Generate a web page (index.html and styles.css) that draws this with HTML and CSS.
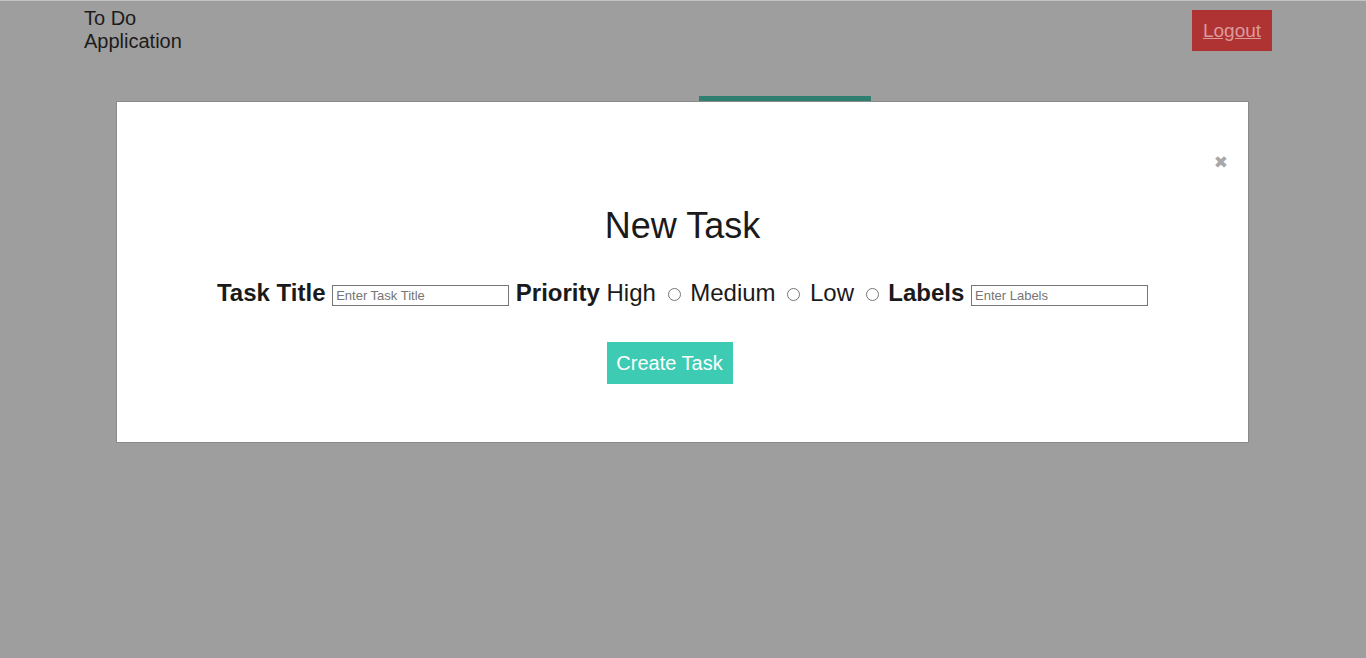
FILE: index.html
```html
<!DOCTYPE html>
<html>
<head>
<meta charset="utf-8">
<title>To Do Application</title>
<link rel="stylesheet" href="styles.css">
</head>
<body>
<header class="topbar">
  <div class="brand">To Do Application</div>
  <a class="logout" href="#">Logout</a>
</header>
<div class="tabs"><div class="tab-active"></div></div>

<div class="modal">
  <button class="close" type="button" aria-label="Close">&#x2716;</button>
  <h2 class="modal-title">New Task</h2>
  <form class="task-form">
    <div class="row">
      <b class="lbl">Task Title</b> <input class="txt" type="text" placeholder="Enter Task Title"> <b class="lbl">Priority</b> High <input type="radio" name="p"> Medium <input type="radio" name="p"> Low <input type="radio" name="p"> <b class="lbl">Labels</b> <input class="txt" type="text" placeholder="Enter Labels">
    </div>
    <div class="actions">
      <button class="create" type="button">Create Task</button>
    </div>
  </form>
</div>
</body>
</html>
```

FILE: styles.css
```css
html, body {
  margin: 0;
  padding: 0;
}
body {
  background: #9e9e9e;
  border-top: 1px solid #c2c2c2;
  height: 657px;
  font-family: "Liberation Sans", Arial, sans-serif;
  color: #1c1c1c;
  overflow: hidden;
}
.topbar {
  display: flex;
  justify-content: space-between;
  align-items: flex-start;
  padding: 6px 94px 0 84px;
  height: 89px;
}
.brand {
  width: 110px;
  font-size: 20px;
  line-height: 23px;
}
.logout {
  margin-top: 3px;
  width: 80px;
  height: 41px;
  background: #b03333;
  color: #dc9a9a;
  font-size: 19px;
  display: flex;
  align-items: center;
  justify-content: center;
  text-decoration: underline;
}
.tabs {
  display: flex;
  padding-left: 699px;
}
.tab-active {
  width: 172px;
  height: 6px;
  background: #2e7f70;
}
.modal {
  position: absolute;
  top: 101px;
  left: 116px;
  width: 1131px;
  height: 340px;
  background: #fff;
  border: 1px solid #8a8a8a;
  text-align: center;
}
.close {
  position: absolute;
  top: 50px;
  right: 20px;
  border: 0;
  background: none;
  padding: 0;
  font-size: 17px;
  line-height: 20px;
  color: #a8a8a8;
  font-family: "DejaVu Sans", sans-serif;
  cursor: pointer;
}
.modal-title {
  margin: 104px 0 0;
  font-size: 36px;
  line-height: 40px;
  font-weight: normal;
  color: #1a1a1a;
}
.task-form {
  margin-top: 33px;
}
.row {
  font-size: 24px;
  line-height: 28px;
  color: #1a1a1a;
}
.lbl {
  font-weight: bold;
}
.txt {
  box-sizing: border-box;
  width: 177px;
  height: 21px;
  border: 1px solid #767676;
  padding: 1px 3px;
  font-family: "Liberation Sans", Arial, sans-serif;
  font-size: 13px;
  vertical-align: 1px;
}
.txt::placeholder {
  color: #757575;
}
input[type="radio"] {
  width: 13px;
  height: 13px;
  margin: 3px 3px 0 5px;
}
.actions {
  display: flex;
  justify-content: center;
  margin-top: 35px;
  padding-right: 26px;
}
.create {
  width: 126px;
  height: 42px;
  border: 0;
  background: #3ecbb4;
  color: #fff;
  font-family: "Liberation Sans", Arial, sans-serif;
  font-size: 20px;
  padding: 0;
}
```
